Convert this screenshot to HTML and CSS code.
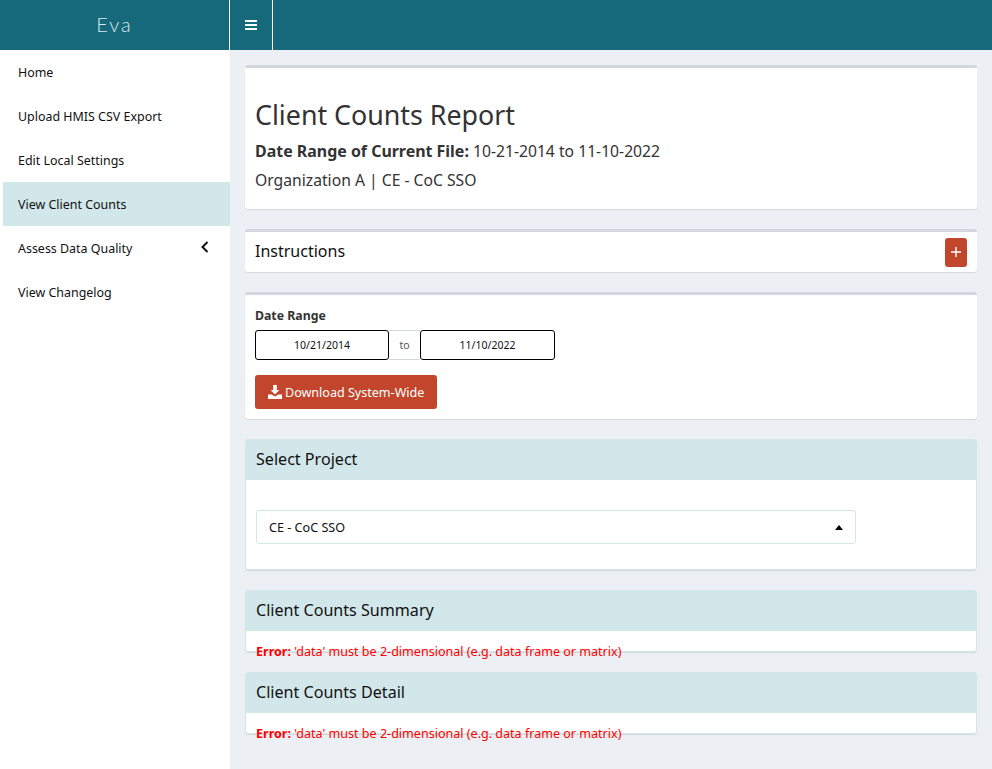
FILE: index.html
```html
<!DOCTYPE html>
<html lang="en">
<head>
<meta charset="utf-8">
<title>Eva</title>
<link rel="stylesheet" href="styles.css">
</head>
<body>
<header class="topbar">
  <div class="brand">Eva</div>
  <button class="toggle" aria-label="Toggle navigation">
    <svg width="12" height="12" viewBox="0 0 12 12"><path d="M0 1h12v2H0zM0 5h12v2H0zM0 9h12v2H0z" fill="#fff"/></svg>
  </button>
</header>
<div class="layout">
  <nav class="sidebar">
    <a class="item">Home</a>
    <a class="item">Upload HMIS CSV Export</a>
    <a class="item">Edit Local Settings</a>
    <a class="item active">View Client Counts</a>
    <a class="item">Assess Data Quality
      <svg class="chev" width="8" height="12" viewBox="0 0 8 12"><path d="M6.5 1 1.5 6l5 5" fill="none" stroke="#111" stroke-width="2"/></svg>
    </a>
    <a class="item">View Changelog</a>
  </nav>
  <main class="content">
    <section class="card top-line intro">
      <h1>Client Counts Report</h1>
      <p class="line"><strong>Date Range of Current File:</strong> 10-21-2014 to 11-10-2022</p>
      <p class="line">Organization A | CE - CoC SSO</p>
    </section>
    <section class="card top-line instructions">
      <h2>Instructions</h2>
      <button class="plus" aria-label="Expand">
        <svg width="10" height="10" viewBox="0 0 10 10"><path d="M4.3 0h1.4v4.3H10v1.4H5.7V10H4.3V5.7H0V4.3h4.3z" fill="#fff"/></svg>
      </button>
    </section>
    <section class="card top-line dates">
      <div class="label">Date Range</div>
      <div class="range">
        <div class="date">10/21/2014</div>
        <div class="to">to</div>
        <div class="date">11/10/2022</div>
      </div>
      <button class="download">
        <svg width="14" height="14" viewBox="0 0 14 14"><path d="M5.2 0h3.6v5h2.6L7 9.6 2.6 5h2.6zM0 9.6h3.6L7 11.4l3.4-1.8H14V14H0z" fill="#fff"/></svg>
        Download System-Wide
      </button>
    </section>
    <section class="card project">
      <div class="head">Select Project</div>
      <div class="body select-wrap">
        <div class="select">CE - CoC SSO<span class="caret"></span></div>
      </div>
    </section>
    <section class="card result">
      <div class="head">Client Counts Summary</div>
      <div class="body err"><strong>Error:</strong> 'data' must be 2-dimensional (e.g. data frame or matrix)</div>
    </section>
    <section class="card result">
      <div class="head">Client Counts Detail</div>
      <div class="body err"><strong>Error:</strong> 'data' must be 2-dimensional (e.g. data frame or matrix)</div>
    </section>
  </main>
</div>
</body>
</html>
```
FILE: styles.css
```css
* { box-sizing: border-box; }
html, body { height: 100%; }
body {
  margin: 0;
  font-family: "Noto Sans", "Open Sans", sans-serif;
  font-size: 12.45px;
  color: #222;
  background: #ecf0f5;
  overflow: hidden;
}
.topbar {
  display: flex;
  height: 50px;
  background: #16697a;
}
.brand {
  width: 229px;
  text-align: center;
  font-family: Lato, sans-serif;
  font-size: 20px;
  line-height: 49px;
  font-weight: 300;
  letter-spacing: 2px;
  color: #d6eaed;
}
.toggle {
  width: 44px;
  height: 50px;
  padding: 0;
  background: transparent;
  border: solid #fff;
  border-width: 0 1px;
  display: flex;
  align-items: center;
  justify-content: center;
}
.layout { display: flex; height: 719px; }
.sidebar {
  width: 230px;
  flex: none;
  background: #fff;
}
.item {
  display: flex;
  align-items: center;
  justify-content: space-between;
  height: 44px;
  margin-left: 3px;
  padding: 0 21px 0 15px;
  color: #111;
}
.item.active { background: #d1e7ea; }
.chev { margin-top: -3px; }
.content {
  flex: 1;
  padding: 15px 15px 0;
  display: flex;
  flex-direction: column;
  gap: 20px;
}
.card {
  background: #fff;
  border-radius: 3px;
  box-shadow: 0 1px 1px rgba(0, 0, 0, .1);
}
.top-line { border-top: 3px solid #d2d6de; }
.intro { height: 144px; padding: 0 10px; }
h1 {
  margin: 29px 0 0;
  font-size: 26.8px;
  line-height: 36px;
  font-weight: 400;
  color: #333;
}
.line {
  margin: 4px 0 0;
  font-size: 15.7px;
  line-height: 25px;
  color: #333;
}
.line strong { font-size: 15.95px; }
.line:nth-of-type(1) { margin-top: 6px; }
.instructions {
  height: 43px;
  padding: 0 10px;
  display: flex;
  align-items: center;
  justify-content: space-between;
}
h2 { margin: 0 0 2px; font-size: 16px; font-weight: 400; color: #111; }
.plus {
  width: 22px;
  height: 29px;
  padding: 0;
  border: 0;
  border-radius: 3px;
  background: #c1462c;
  display: flex;
  align-items: center;
  justify-content: center;
}
.dates { height: 127px; padding: 13px 10px 0; }
.label { font-weight: 700; font-size: 12.3px; line-height: 16px; color: #333; }
.range {
  display: grid;
  grid-template-columns: 134px 31px 135px;
  margin-top: 6px;
  height: 30px;
  width: 300px;
}
.date {
  border: 1px solid #000;
  border-radius: 3px;
  font-size: 10.5px;
  line-height: 28px;
  text-align: center;
  color: #111;
}
.to {
  text-align: center;
  font-size: 10.5px;
  line-height: 28px;
  color: #555;
  border-block: 1px solid #d2d6de;
}
.download {
  display: flex;
  align-items: center;
  gap: 3px;
  margin-top: 15px;
  height: 34px;
  padding: 0 13px;
  border: 0;
  border-radius: 3px;
  background: #c1462c;
  color: #fff;
  font: 12.55px "Noto Sans", sans-serif;
}
.head {
  height: 41px;
  padding: 0 11px;
  line-height: 40px;
  font-size: 16.1px;
  color: #111;
  background: #d1e7ea;
  border-radius: 3px 3px 0 0;
}
.project { height: 131px; }
.body {
  border: solid #d1e7ea;
  border-width: 0 1px 1px;
  border-radius: 0 0 3px 3px;
}
.select-wrap { height: 90px; padding: 30px 10px 0; }
.select {
  position: relative;
  width: 600px;
  height: 34px;
  padding: 0 12px;
  line-height: 33px;
  border: 1px solid #d1e7ea;
  border-radius: 3px;
  font-size: 12.6px;
  color: #111;
}
.caret {
  position: absolute;
  right: 12px;
  top: 14px;
  border: solid transparent;
  border-width: 0 4px 5px;
  border-bottom-color: #000;
}
.result { height: 62px; }
.err {
  height: 21px;
  padding: 11px 10px 0;
  font-size: 12.55px;
  line-height: 19px;
  color: #f00;
  white-space: nowrap;
}
```
